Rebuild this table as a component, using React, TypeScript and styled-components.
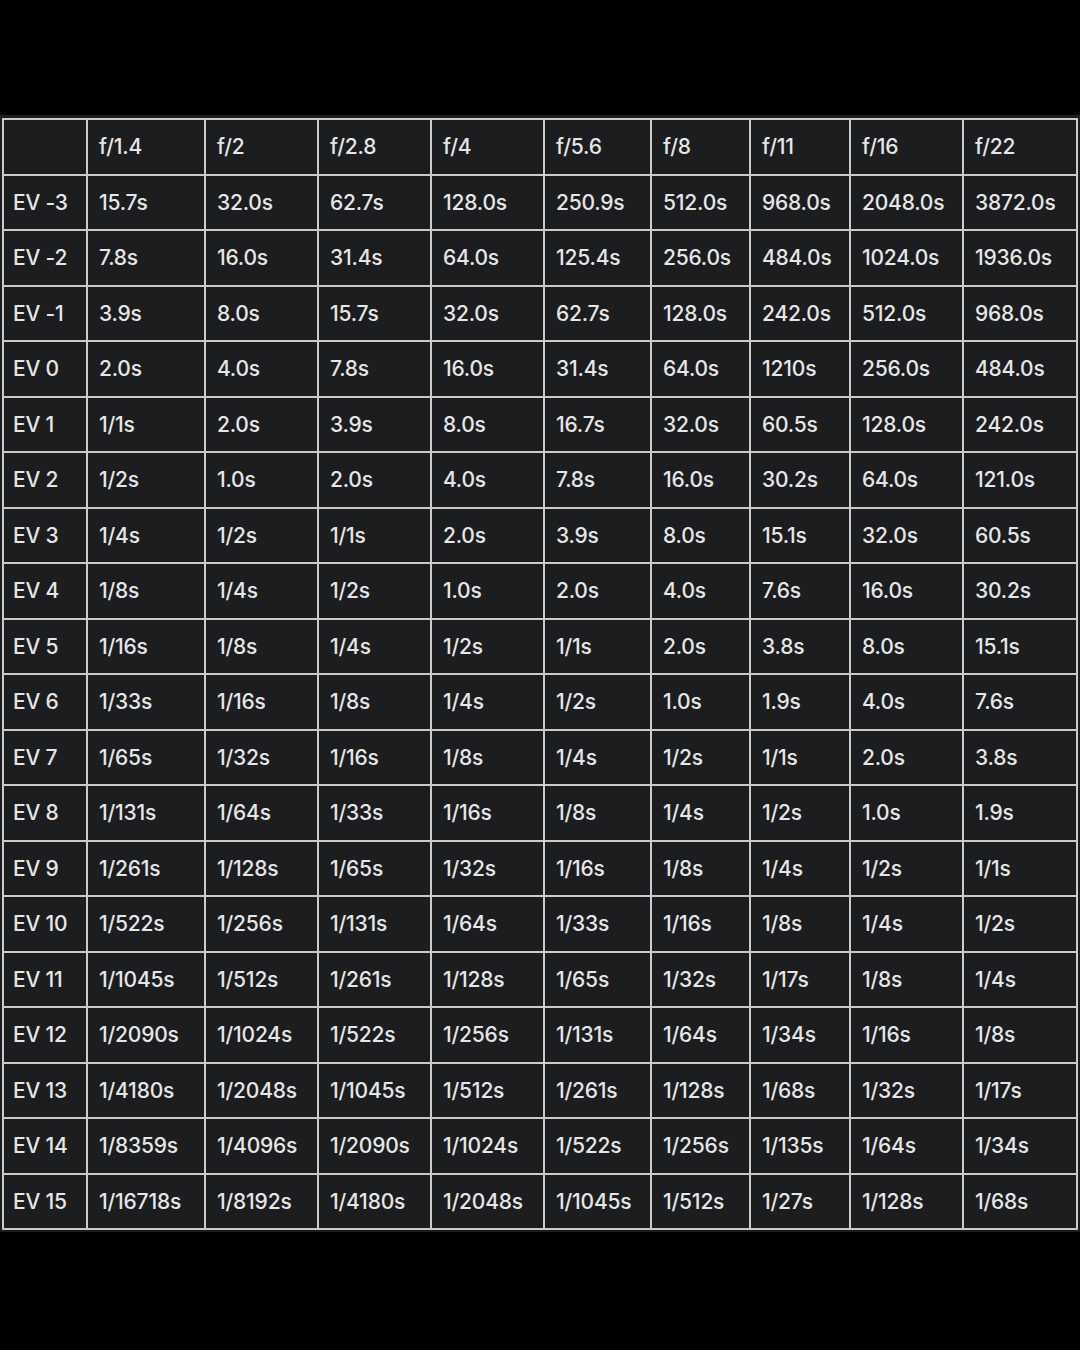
import React from "react";
import styled, { createGlobalStyle } from "styled-components";

const Global = createGlobalStyle`
  html, body { margin: 0; padding: 0; background: #000; }
  body { font-family: Inter, "Noto Sans", "Liberation Sans", sans-serif; }
`;

const Page = styled.div`
  width: 1080px;
  height: 1350px;
  background: #000;
  padding-top: 115px;
  box-sizing: border-box;
`;

const Band = styled.div`
  background: #1c1d1f;
  padding: 3px 0 2px 2px;
`;

const Table = styled.table`
  border-collapse: collapse;
  table-layout: fixed;
  width: 1076px;
  color: #e6e6e6;
  font-size: 21px;
  letter-spacing: -0.2px;
`;

const Row = styled.tr`
  height: 55.5px;
`;

const Cell = styled.td<{ $first?: boolean }>`
  border: 2px solid #cbcbcb;
  padding: 0 0 0 ${(p) => (p.$first ? 9 : 11)}px;
  white-space: nowrap;
  vertical-align: middle;
  text-align: left;
  font-weight: 500;
`;

const widths = [84, 118, 113, 113, 113, 107, 99, 100, 113, 114];
const apertures = ["f/1.4", "f/2", "f/2.8", "f/4", "f/5.6", "f/8", "f/11", "f/16", "f/22"];

const rows: [string, string[]][] = [
  ["EV -3", ["15.7s", "32.0s", "62.7s", "128.0s", "250.9s", "512.0s", "968.0s", "2048.0s", "3872.0s"]],
  ["EV -2", ["7.8s", "16.0s", "31.4s", "64.0s", "125.4s", "256.0s", "484.0s", "1024.0s", "1936.0s"]],
  ["EV -1", ["3.9s", "8.0s", "15.7s", "32.0s", "62.7s", "128.0s", "242.0s", "512.0s", "968.0s"]],
  ["EV 0", ["2.0s", "4.0s", "7.8s", "16.0s", "31.4s", "64.0s", "1210s", "256.0s", "484.0s"]],
  ["EV 1", ["1/1s", "2.0s", "3.9s", "8.0s", "16.7s", "32.0s", "60.5s", "128.0s", "242.0s"]],
  ["EV 2", ["1/2s", "1.0s", "2.0s", "4.0s", "7.8s", "16.0s", "30.2s", "64.0s", "121.0s"]],
  ["EV 3", ["1/4s", "1/2s", "1/1s", "2.0s", "3.9s", "8.0s", "15.1s", "32.0s", "60.5s"]],
  ["EV 4", ["1/8s", "1/4s", "1/2s", "1.0s", "2.0s", "4.0s", "7.6s", "16.0s", "30.2s"]],
  ["EV 5", ["1/16s", "1/8s", "1/4s", "1/2s", "1/1s", "2.0s", "3.8s", "8.0s", "15.1s"]],
  ["EV 6", ["1/33s", "1/16s", "1/8s", "1/4s", "1/2s", "1.0s", "1.9s", "4.0s", "7.6s"]],
  ["EV 7", ["1/65s", "1/32s", "1/16s", "1/8s", "1/4s", "1/2s", "1/1s", "2.0s", "3.8s"]],
  ["EV 8", ["1/131s", "1/64s", "1/33s", "1/16s", "1/8s", "1/4s", "1/2s", "1.0s", "1.9s"]],
  ["EV 9", ["1/261s", "1/128s", "1/65s", "1/32s", "1/16s", "1/8s", "1/4s", "1/2s", "1/1s"]],
  ["EV 10", ["1/522s", "1/256s", "1/131s", "1/64s", "1/33s", "1/16s", "1/8s", "1/4s", "1/2s"]],
  ["EV 11", ["1/1045s", "1/512s", "1/261s", "1/128s", "1/65s", "1/32s", "1/17s", "1/8s", "1/4s"]],
  ["EV 12", ["1/2090s", "1/1024s", "1/522s", "1/256s", "1/131s", "1/64s", "1/34s", "1/16s", "1/8s"]],
  ["EV 13", ["1/4180s", "1/2048s", "1/1045s", "1/512s", "1/261s", "1/128s", "1/68s", "1/32s", "1/17s"]],
  ["EV 14", ["1/8359s", "1/4096s", "1/2090s", "1/1024s", "1/522s", "1/256s", "1/135s", "1/64s", "1/34s"]],
  ["EV 15", ["1/16718s", "1/8192s", "1/4180s", "1/2048s", "1/1045s", "1/512s", "1/27s", "1/128s", "1/68s"]],
];

export default function App() {
  return (
    <Page>
      <Global />
      <Band>
        <Table>
          <colgroup>
            {widths.map((w, i) => (
              <col key={i} style={{ width: w }} />
            ))}
          </colgroup>
          <thead>
            <Row>
              <Cell as="th" $first />
              {apertures.map((a) => (
                <Cell as="th" key={a}>
                  {a}
                </Cell>
              ))}
            </Row>
          </thead>
          <tbody>
            {rows.map(([ev, vals]) => (
              <Row key={ev}>
                <Cell $first>{ev}</Cell>
                {vals.map((v, i) => (
                  <Cell key={i}>{v}</Cell>
                ))}
              </Row>
            ))}
          </tbody>
        </Table>
      </Band>
    </Page>
  );
}
